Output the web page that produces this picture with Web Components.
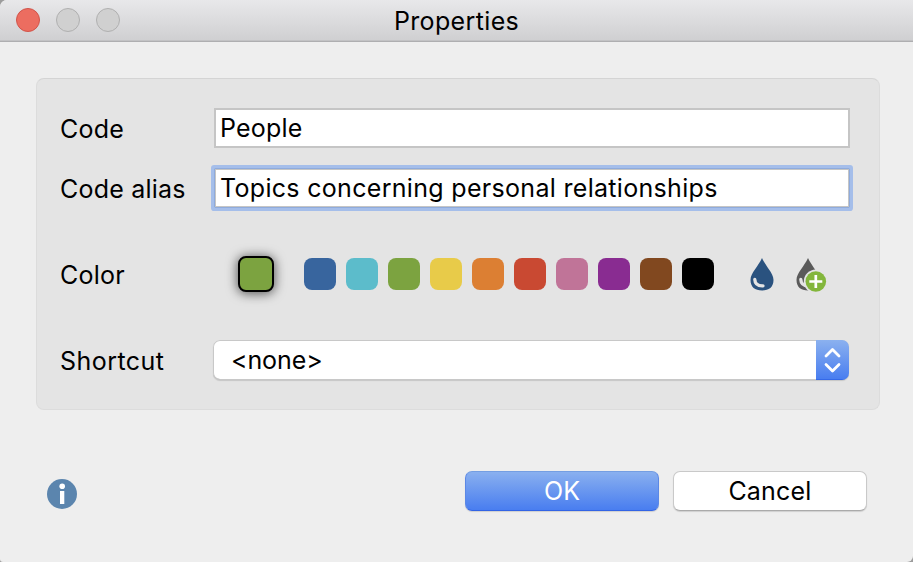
<!DOCTYPE html>
<html lang="en">
<head>
<meta charset="utf-8">
<title>Properties</title>
<style>
html,body{margin:0;height:100%;background:#9c9c9c}
body{font:25px/40px Inter,"Liberation Sans",sans-serif;color:#000;overflow:hidden}
</style>
</head>
<body>
<dialog-window heading="Properties" style="--title-track:.36px">
  <settings-panel>
    <form-row label="Code" style="--label-track:.25px"><text-field style="letter-spacing:.2px">People</text-field></form-row>
    <form-row label="Code alias" style="--label-track:.22px"><text-field focused style="letter-spacing:.31px">Topics concerning personal relationships</text-field></form-row>
    <form-row label="Color" style="--label-track:.25px"><color-picker></color-picker></form-row>
    <form-row label="Shortcut" style="--label-track:.46px"><select-box>&lt;none&gt;</select-box></form-row>
  </settings-panel>
  <dialog-footer slot="footer">
    <push-button primary>OK</push-button>
    <push-button style="letter-spacing:.2px">Cancel</push-button>
  </dialog-footer>
</dialog-window>
<script>
const define = (name, markup, setup) => customElements.define(name, class extends HTMLElement {
  constructor() {
    super();
    this.attachShadow({mode: "open"}).innerHTML = markup;
  }
  connectedCallback() { if (setup) setup(this, this.shadowRoot); }
});

define("dialog-window", `
<style>
:host{display:flex;flex-direction:column;width:913px;height:562px;box-sizing:border-box;background:#eee;border-radius:7px 0 6px 3px;overflow:hidden}
header{flex:none;height:42px;box-sizing:border-box;display:grid;grid-template-columns:1fr auto 1fr;align-items:center;padding:0 16px 1px;background:linear-gradient(#e8e8ea,#cfcfd1);border-bottom:1px solid #aeaeb0;box-shadow:inset 0 -1px #c2c2c4}
.lights{display:flex;gap:16px}
i{width:24px;height:24px;box-sizing:border-box;border-radius:50%;background:#d0d0d0;border:1px solid #b0b0b0}
i:first-child{background:#ec6d60;border-color:#d1544a}
h1{font:inherit;line-height:38px;padding-top:2px;margin:0;letter-spacing:var(--title-track,0)}
main{flex:none;padding:36px 33px 0 36px}
</style>
<header><div class="lights"><i></i><i></i><i></i></div><h1></h1></header>
<main><slot></slot></main><slot name="footer"></slot>`,
(el, root) => root.querySelector("h1").textContent = el.getAttribute("heading"));

define("settings-panel", `
<style>
:host{display:grid;grid-template-rows:60px 86px 86px 40px;height:332px;box-sizing:border-box;padding:29px 30px 0 23px;background:#e4e4e4;border:1px solid #dcdcdc;border-top-color:#d4d4d4;border-radius:8px}
</style><slot></slot>`);

define("form-row", `
<style>
:host{display:grid;grid-template-columns:154px 1fr;height:40px}
label{line-height:42px;letter-spacing:var(--label-track,0);white-space:nowrap}
</style><label></label><slot></slot>`,
(el, root) => root.querySelector("label").textContent = el.getAttribute("label"));

define("text-field", `
<style>
:host{display:block;box-sizing:border-box;height:40px;width:636px;padding:0 4px;border:2px solid #c5c5c5;background:#fff;line-height:36px;white-space:nowrap}
:host([focused]){border:1px solid #8fabdc;box-shadow:inset 0 0 0 1px #c5c5c5,0 0 0 3px #a5beea;border-radius:1px;line-height:38px;padding:0 5px}
</style><slot></slot>`);

define("color-picker", `
<style>
:host{display:flex;align-items:center;height:40px;padding-left:24px}
b{width:32px;height:32px;border-radius:8px;margin-right:10px;background:var(--c)}
.current{border:2px solid #000;margin-right:30px;box-shadow:0 1px 11px 1px #0009}
svg{width:32px;height:40px;margin-left:22px;overflow:visible}
svg+svg{margin-left:14px}
</style>
<b class="current" style="--c:#7ca340"></b>
<b style="--c:#38659e"></b><b style="--c:#5cbccb"></b><b style="--c:#7ca340"></b><b style="--c:#e8cb49"></b><b style="--c:#dc7f33"></b><b style="--c:#c94932"></b><b style="--c:#c07498"></b><b style="--c:#892c91"></b><b style="--c:#81481f"></b><b style="--c:#000"></b>
<svg viewBox="0 0 32 40"><path d="M16 4C12.500 12 4.500 19 4.500 26C4.500 33 9 36.500 16 36.500S27.500 33 27.500 26C27.500 19 19.500 12 16 4Z" fill="#2a527f"/><path d="M8.800 25.500C9 30 12 32 17 31.800" fill="none" stroke="#e4e4e4" stroke-width="3.300" stroke-linecap="round"/></svg>
<svg viewBox="0 0 32 40"><path d="M16 4C12.500 12 4.500 19 4.500 26C4.500 33 9 36.500 16 36.500S27.500 33 27.500 26C27.500 19 19.500 12 16 4Z" fill="#5a5a5a"/><path d="M8.800 25.500C9 30 12 32 17 31.800" fill="none" stroke="#e4e4e4" stroke-width="3.300" stroke-linecap="round"/><circle cx="23.800" cy="27.500" r="12" fill="#e4e4e4"/><circle cx="23.800" cy="27.500" r="10.300" fill="#83b63c"/><path d="M17.300 27.500h13M23.800 21v13" stroke="#fff" stroke-width="2.700"/></svg>`);

define("select-box", `
<style>
:host{display:flex;justify-content:space-between;box-sizing:border-box;height:40px;width:636px;margin-left:-1px;border-radius:7px;background:#fff;box-shadow:inset 0 0 0 1px #c8c8c8,inset 0 -1px #aaa,0 1px 1px #0002;padding-left:18px;line-height:41px;letter-spacing:-.1px;overflow:hidden}
span{width:33px;box-sizing:border-box;background:linear-gradient(#8bb1ef,#477cf0) border-box;border-bottom:1px solid #3569e8}
svg{display:block;width:33px;height:40px}
</style><slot></slot><span><svg viewBox="0 0 33 40"><path d="M10 16L16.500 9.500L23 16M10 24.500L16.500 31L23 24.500" fill="none" stroke="#fff" stroke-width="2.800" stroke-linecap="round" stroke-linejoin="round"/></svg></span>`);

define("dialog-footer", `
<style>
:host{display:flex;align-items:center;gap:14px;padding:61px 46px 0 47px}
svg{width:30px;height:30px;margin:5px auto 0 0}
</style>
<svg viewBox="0 0 30 30"><circle cx="15" cy="15" r="15" fill="#5b85ae"/><circle cx="15.200" cy="7.300" r="2.800" fill="#fff"/><path d="M13 12h4.300v13H13z" fill="#fff"/></svg><slot></slot>`);

define("push-button", `
<style>
:host{display:block;width:194px;height:40px;box-sizing:border-box;border-radius:7px;background:#fff;border:1px solid #c9c9c9;border-bottom-color:#aaa;box-shadow:0 1px 1px #0002;text-align:center;line-height:38px}
:host([primary]){color:#fff;background:linear-gradient(#8bb1ef,#477cf0) border-box;border-color:#749ee2 #5c88e5 #3264e5}
</style><slot></slot>`);
</script>
</body>
</html>
